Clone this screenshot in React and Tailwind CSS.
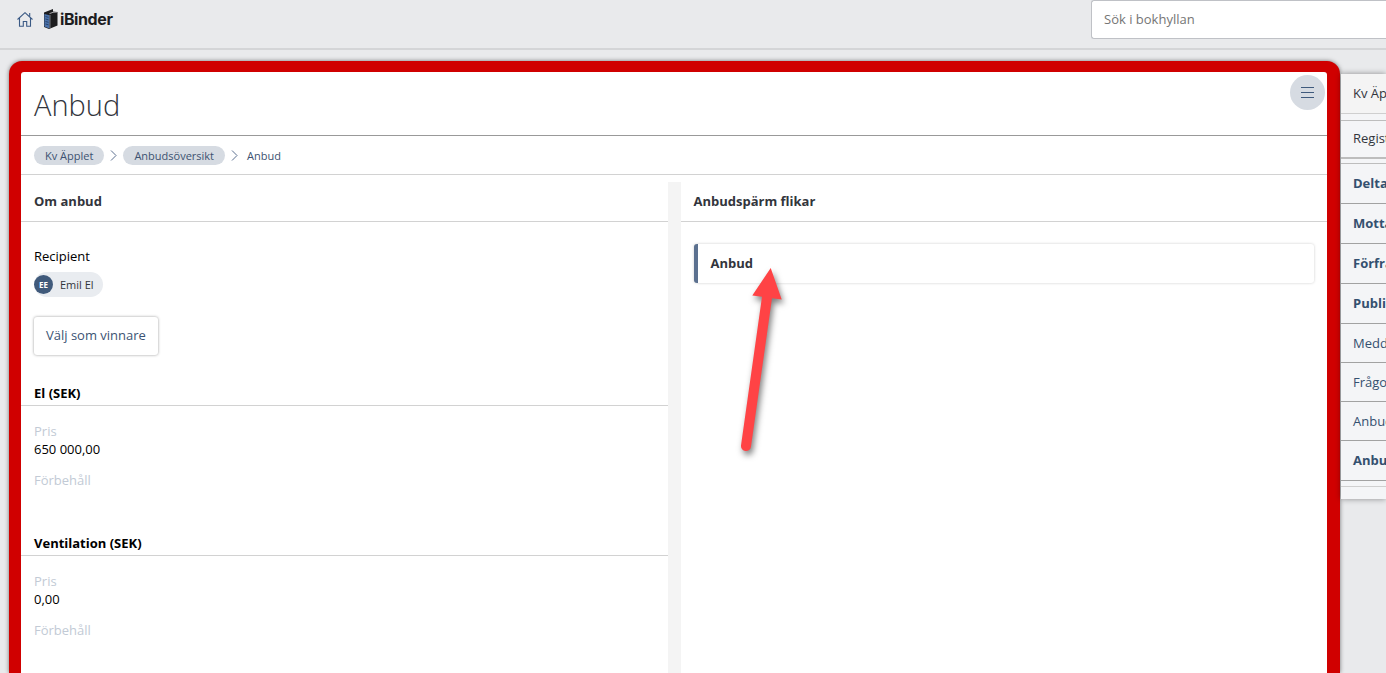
import React from "react";

const tabs = [
  { label: "Deltagare", bold: true },
  { label: "Mottagare", bold: true },
  { label: "Förfrågan", bold: true },
  { label: "Publicera", bold: true },
  { label: "Meddelanden", bold: false },
  { label: "Frågor", bold: false },
  { label: "Anbudsöversikt", bold: false },
  { label: "Anbud", bold: true },
];

const bids = [
  { name: "El (SEK)", price: "650 000,00" },
  { name: "Ventilation (SEK)", price: "0,00" },
];

const HomeIcon = () => (
  <svg width="16" height="15" viewBox="0 0 16 15" fill="none" stroke="#3b5a85" strokeWidth="1.1">
    <path d="M0.5 7.5 L8 0.7 L15.5 7.5" />
    <path d="M2.5 6 V14.3 H6.3 V9.5 H9.7 V14.3 H13.5 V6" />
    <path d="M12.7 1 V4.5" />
  </svg>
);

const BinderIcon = () => (
  <svg width="14" height="20" viewBox="0 0 14 20">
    <path d="M0 3.5 L9 0 V2.5 L13.5 3 V16.5 L5 20 L0 18 Z" fill="#1d1d1f" />
    <path d="M0.4 5 L5.4 6.2 V19.4 L0.4 17.6 Z" fill="#4a72ab" />
    <path
      d="M1.5 7.5 L4.5 8.3 M1.5 10 L4.5 10.8 M1.5 12.5 L4.5 13.3 M1.5 15 L4.5 15.8"
      stroke="#22375a"
      strokeWidth="0.8"
    />
    <path d="M5.5 4.6 L9 3.3 L13 3" stroke="#e9eaec" strokeWidth="0.7" fill="none" />
    <path d="M6 6 V19" stroke="#b4bac4" strokeWidth="0.6" />
  </svg>
);

const Chevron = () => (
  <svg className="mx-[6px]" width="7" height="11" viewBox="0 0 7 11" fill="none" stroke="#5d7190" strokeWidth="1">
    <path d="M1 0.5 L6 5.5 L1 10.5" />
  </svg>
);

const Arrow = () => (
  <svg
    className="absolute left-[48px] top-[20px] overflow-visible pointer-events-none"
    style={{ filter: "drop-shadow(2px 4px 3px rgba(0,0,0,0.5))" }}
    width="48"
    height="192"
    viewBox="0 0 48 192"
  >
    <path
      d="M28.7 4 L39.7 35.5 L30 34.2 L9 182.5 A5 5 0 0 1 -1 181.5 L20 32.8 L10.3 31.5 Z"
      fill="#ff4345"
    />
  </svg>
);

const Bid = ({ bid }) => (
  <section className="mb-[45px]">
    <h3 className="border-b border-[#d2d2d2] px-[13px] pb-[3px] font-bold text-black">{bid.name}</h3>
    <dl className="mt-4 px-[13px]">
      <dt className="text-[#c2cad5]">Pris</dt>
      <dd className="text-black">{bid.price}</dd>
      <dt className="mt-[13px] text-[#c2cad5]">Förbehåll</dt>
    </dl>
  </section>
);

const App = () => {
  return (
    <div className="flex h-screen flex-col overflow-hidden bg-[#e9eaec] font-['Open_Sans',sans-serif] text-[13px] leading-[18px] text-[#32353c]">
      <header className="flex h-[50px] shrink-0 items-start border-b-2 border-[#d4d5d7] pl-[17px]">
        <a href="#" aria-label="Hem" className="mt-3">
          <HomeIcon />
        </a>
        <a href="#" className="ml-[11px] mt-[9px] flex items-center text-[#1d1d1f]">
          <BinderIcon />
          <span className="ml-[2px] font-['Inter',sans-serif] text-[16px] font-bold leading-5 tracking-tight">iBinder</span>
        </a>
        <input
          type="text"
          aria-label="Sök i bokhyllan"
          placeholder="Sök i bokhyllan"
          className="ml-auto h-[39px] w-[295px] rounded-l-[3px] border border-r-0 border-[#bfc1c6] bg-white px-3 pb-[2px] placeholder:text-[#757575]"
        />
      </header>

      <div className="flex min-h-0 flex-1 pl-[9px] pt-[11px]">
        <main className="flex min-w-0 flex-1 flex-col rounded-t-[13px] border-x-[13px] border-l-[12px] border-t-[11px] border-[#d00000] bg-[#d00000] shadow-[0_0_4px_rgba(0,0,0,0.5)]">
          <div className="flex min-h-0 flex-1 flex-col rounded-t-[3px] bg-white">
            <div className="flex h-16 shrink-0 items-start justify-between border-b border-[#999] pl-[13px] pr-[2px]">
              <h1 className="mt-[13px] text-[29px] font-light leading-[40px]">Anbud</h1>
              <button
                type="button"
                aria-label="Meny"
                className="mt-[3px] flex h-[35px] w-[35px] items-center justify-center rounded-full bg-[#d6dbe2]"
              >
                <svg width="13" height="11" viewBox="0 0 13 11" stroke="#3f5a7d" strokeWidth="1.2">
                  <path d="M0 0.5 H13 M0 5.5 H13 M0 10.5 H13" />
                </svg>
              </button>
            </div>

            <nav className="flex h-[39px] shrink-0 items-center border-b border-[#d2d2d2] px-[13px] text-[11px] text-[#3d5271]">
              <a href="#" className="rounded-full bg-[#d6dbe2] px-[11px] leading-[19px]">Kv Äpplet</a>
              <Chevron />
              <a href="#" className="rounded-full bg-[#d6dbe2] px-[11px] leading-[19px]">Anbudsöversikt</a>
              <Chevron />
              <span className="ml-[3px] leading-[19px]">Anbud</span>
            </nav>

            <div className="mt-[7px] flex min-h-0 flex-1">
              <div className="min-w-0 flex-1">
                <h2 className="border-b border-[#d2d2d2] px-[13px] pb-[11px] pt-[10px] font-bold">Om anbud</h2>
                <div className="mb-[29px] mt-[25px] px-[13px]">
                  <p className="text-black">Recipient</p>
                  <div className="mt-[7px] flex w-fit items-center rounded-full bg-[#e9ecf0] pr-[9px] text-[11px] leading-[25px]">
                    <span className="mr-[7px] flex h-[19px] w-[19px] items-center justify-center rounded-full bg-[#405a7b] text-[8px] font-bold text-white">
                      EE
                    </span>
                    Emil El
                  </div>
                  <button
                    type="button"
                    className="mt-[20px] h-[38px] rounded-[3px] bg-white px-3 pb-[2px] text-[#3b5373] shadow-[0_0_3px_rgba(0,0,0,0.4)]"
                  >
                    Välj som vinnare
                  </button>
                </div>
                {bids.map((bid) => (
                  <Bid key={bid.name} bid={bid} />
                ))}
              </div>

              <div className="w-[13px] bg-[#f4f4f4]" />

              <div className="min-w-0 flex-1">
                <h2 className="border-b border-[#d2d2d2] px-[13px] pb-[11px] pt-[10px] font-bold">Anbudspärm flikar</h2>
                <div className="relative mx-[13px] mt-[22px]">
                  <a
                    href="#"
                    className="block rounded-[3px] border-l-4 border-[#5b708f] bg-white px-[13px] pb-[11px] pt-[10px] font-bold shadow-[0_0_3px_rgba(0,0,0,0.2)]"
                  >
                    Anbud
                  </a>
                  <Arrow />
                </div>
              </div>
            </div>
          </div>
        </main>

        <aside className="ml-px mt-[13px] w-[45px] self-start overflow-hidden whitespace-nowrap bg-[#f4f5f7] pb-3 shadow-[0_0_6px_rgba(0,0,0,0.4)]">
          <a href="#" className="block border-b border-[#cfcfcf] bg-[#f4f4f4] pb-[11px] pl-3 pt-[10px]">Kv Äpplet</a>
          <a href="#" className="mt-[6px] block border-b-2 border-t border-[#bdbdbd] pb-[10px] pl-3 pt-2">Register</a>
          <nav className="mt-1 border-t border-[#bdbdbd] text-[#34506f]">
            {tabs.map((tab) => (
              <a
                key={tab.label}
                href="#"
                className={`block border-b border-[#a2a2a2] pl-3 pt-[10px] ${tab.bold ? "pb-[11px] font-bold" : "pb-[10px]"}`}
              >
                {tab.label}
              </a>
            ))}
          </nav>
          <div className="mt-[5px] border-t border-[#cfcfcf]" />
        </aside>
      </div>
    </div>
  );
};

export default App;
